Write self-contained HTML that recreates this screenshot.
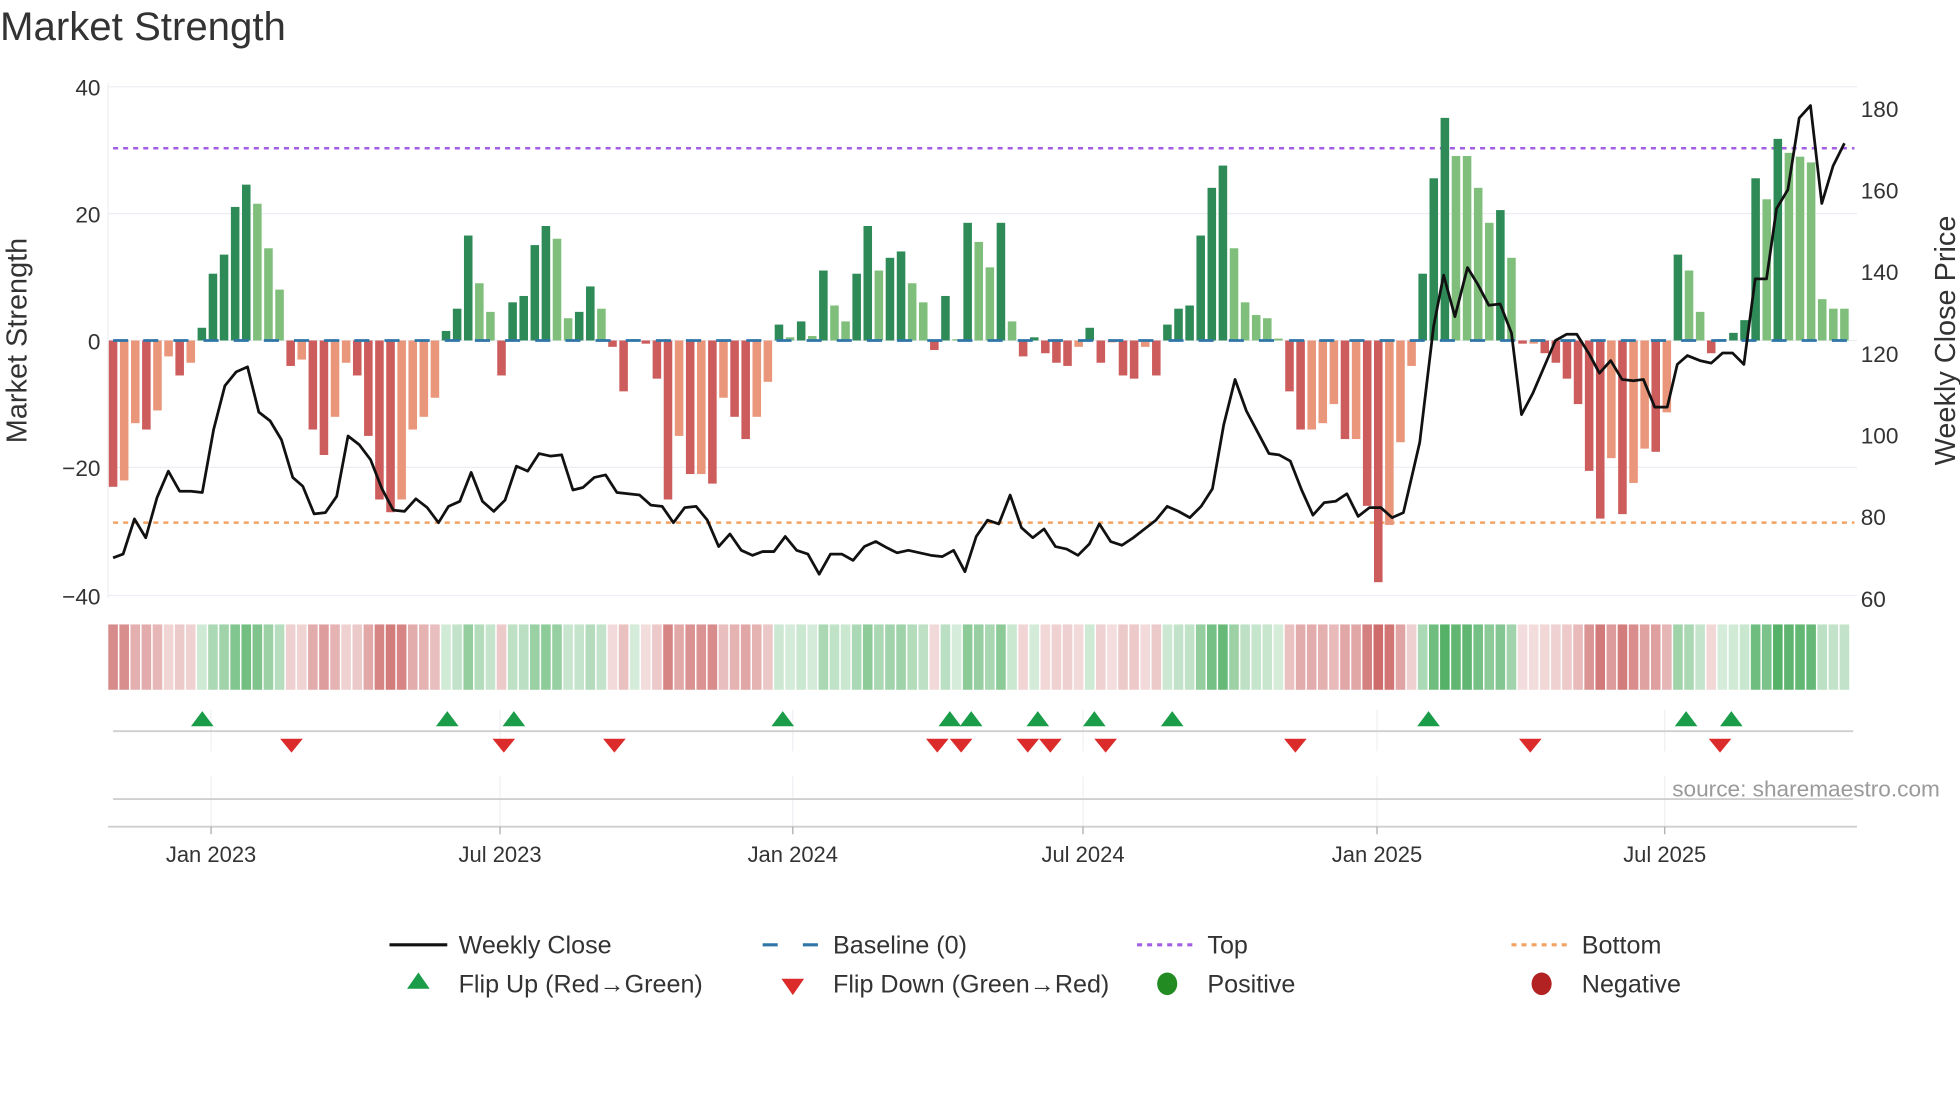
<!DOCTYPE html>
<html><head><meta charset="utf-8"><style>
html,body{margin:0;padding:0;background:#fff;width:1960px;height:1102px;overflow:hidden}
svg{display:block}
text{font-family:"Liberation Sans","DejaVu Sans",sans-serif;fill:#333}
</style></head><body>
<svg id="s" width="1960" height="1102" viewBox="0 0 1560 877.1" preserveAspectRatio="none" xmlns="http://www.w3.org/2000/svg">
<text x="0" y="32" font-size="32">Market Strength</text>
<g stroke="#eceef3" stroke-width="1">
<line x1="86" y1="69" x2="1478" y2="69"/><line x1="86" y1="170" x2="1478" y2="170"/><line x1="86" y1="271" x2="1478" y2="271"/><line x1="86" y1="372" x2="1478" y2="372"/><line x1="86" y1="474" x2="1478" y2="474"/>
<line x1="86" y1="66" x2="86" y2="476"/>
</g>
<g font-size="18" text-anchor="end">
<text x="80" y="76">40</text><text x="80" y="177">20</text><text x="80" y="278">0</text><text x="80" y="379">−20</text><text x="80" y="481">−40</text>
</g>
<g font-size="18">
<text x="1481" y="93">180</text><text x="1481" y="158">160</text><text x="1481" y="223">140</text><text x="1481" y="288">120</text><text x="1481" y="353">100</text><text x="1481" y="418">80</text><text x="1481" y="483">60</text>
</g>
<text transform="translate(21,271) rotate(-90)" font-size="23" text-anchor="middle">Market Strength</text>
<text transform="translate(1556,271) rotate(-90)" font-size="23" text-anchor="middle">Weekly Close Price</text>
<line x1="90" y1="118" x2="1476" y2="118" stroke="#a45ee5" stroke-width="2" stroke-dasharray="4,4"/>
<line x1="90" y1="416" x2="1476" y2="416" stroke="#f4a261" stroke-width="2" stroke-dasharray="4,4"/>
<g id="bars"></g>
<line x1="90" y1="271" x2="1476" y2="271" stroke="#2f75a8" stroke-width="2.2" stroke-dasharray="12,12"/>
<polyline id="price" fill="none" stroke="#111" stroke-width="2.2" stroke-linejoin="round"/>
<g id="heat"></g>
<g stroke="#eef0f3" stroke-width="1">
<line x1="168" y1="565" x2="168" y2="598"/><line x1="398" y1="565" x2="398" y2="598"/><line x1="631" y1="565" x2="631" y2="598"/><line x1="862" y1="565" x2="862" y2="598"/><line x1="1096" y1="565" x2="1096" y2="598"/><line x1="1325" y1="565" x2="1325" y2="598"/>
<line x1="168" y1="618" x2="168" y2="658"/><line x1="398" y1="618" x2="398" y2="658"/><line x1="631" y1="618" x2="631" y2="658"/><line x1="862" y1="618" x2="862" y2="658"/><line x1="1096" y1="618" x2="1096" y2="658"/><line x1="1325" y1="618" x2="1325" y2="658"/>
</g>
<line x1="90" y1="582" x2="1475" y2="582" stroke="#cfcfcf" stroke-width="1.5"/>
<line x1="90" y1="636" x2="1475" y2="636" stroke="#cfcfcf" stroke-width="1.5"/>
<line x1="86" y1="658" x2="1478" y2="658" stroke="#cfcfcf" stroke-width="1.5"/>
<g stroke="#aaa" stroke-width="1"><line x1="168" y1="658" x2="168" y2="664"/><line x1="398" y1="658" x2="398" y2="664"/><line x1="631" y1="658" x2="631" y2="664"/><line x1="862" y1="658" x2="862" y2="664"/><line x1="1096" y1="658" x2="1096" y2="664"/><line x1="1325" y1="658" x2="1325" y2="664"/></g>
<g id="marks"></g>
<text x="1544" y="634" font-size="18" text-anchor="end" style="fill:#9a9a9a">source: sharemaestro.com</text>
<g font-size="17.5" text-anchor="middle">
<text x="168" y="686">Jan 2023</text><text x="398" y="686">Jul 2023</text><text x="631" y="686">Jan 2024</text><text x="862" y="686">Jul 2024</text><text x="1096" y="686">Jan 2025</text><text x="1325" y="686">Jul 2025</text>
</g>
<line x1="310" y1="752" x2="356" y2="752" stroke="#111" stroke-width="2.5"/>
<line x1="607" y1="752" x2="651" y2="752" stroke="#2f75a8" stroke-width="2.5" stroke-dasharray="12,20"/>
<line x1="905" y1="752" x2="949" y2="752" stroke="#a45ee5" stroke-width="2.5" stroke-dasharray="4,4"/>
<line x1="1203" y1="752" x2="1247" y2="752" stroke="#f4a261" stroke-width="2.5" stroke-dasharray="4,4"/>
<polygon points="333,774 342,787 324,787" fill="#1a9c48"/>
<polygon points="622,779 640,779 631,792" fill="#dc2b2b"/>
<ellipse cx="929" cy="783" rx="8" ry="9" fill="#228b22"/>
<ellipse cx="1227" cy="783" rx="8" ry="9" fill="#b22222"/>
<g font-size="20">
<text x="365" y="759">Weekly Close</text><text x="663" y="759">Baseline (0)</text><text x="961" y="759">Top</text><text x="1259" y="759">Bottom</text>
<text x="365" y="790">Flip Up (Red→Green)</text><text x="663" y="790">Flip Down (Green→Red)</text><text x="961" y="790">Positive</text><text x="1259" y="790">Negative</text>
</g>
</svg>
<script>
var NS="http://www.w3.org/2000/svg";
var v=[-23,-22,-13,-14,-11,-2.5,-5.5,-3.5,
2,10.5,13.5,21,24.5,21.5,14.5,8,
-4,-3,-14,-18,-12,-3.5,-5.5,-15,-25,-27,-25,-14,-12,-9,
1.5,5,16.5,9,4.5,-5.5,6,7,15,18,16,3.5,4.5,8.5,5,
-1,-8,0,-0.5,-6,-25,-15,-21,-21,-22.5,-9,-12,-15.5,-12,-6.5,
2.5,0.5,3,0.7,11,5.5,3,10.5,18,11,13,14,9,6,
-1.5,7,0,18.5,15.5,11.5,18.5,3,-2.5,0.5,-2,-3.5,-4,-1,2,-3.5,-0.3,-5.5,-6,-1,-5.5,
2.5,5,5.5,16.5,24,27.5,14.5,6,4,3.5,0.3,
-8,-14,-14,-13,-10,-15.5,-15.5,-26,-38,-29,-16,-4,
10.5,25.5,35,29,29,24,18.5,20.5,13,
-0.5,-0.5,-2,-3.5,-6,-10,-20.5,-28,-18.5,-27.3,-22.4,-17,-17.5,-11.3,
13.5,11,4.5,-2,0,1.2,3.2,25.5,22.2,31.7,29.5,28.9,28,6.5,5,5];
var n=v.length,x0=90,x1=1468,sp=(x1-x0)/(n-1),Z=271,k=5.0625;
var bars=document.getElementById('bars'),heat=document.getElementById('heat');
function R(g,x,y,w,h,f){var r=document.createElementNS(NS,'rect');r.setAttribute('x',x);r.setAttribute('y',y);r.setAttribute('width',w);r.setAttribute('height',h);r.setAttribute('fill',f);g.appendChild(r);}
for(var i=0;i<n;i++){var c=x0+i*sp,val=v[i],p=i?v[i-1]:0,col;
 if(val>=0)col=(val>p)?'#2e8b57':'#7fbf7b';else col=(val<p||i==0)?'#cd5c5c':'#e9967a';
 var h=Math.abs(val)*k; if(h<1)h=1;
 R(bars,c-3.4,val>=0?Z-h:Z,6.8,h,col);
 var t=Math.min(Math.abs(val)/32,1),hc;
 if(val>=0)hc='rgba(70,170,90,'+(0.22+0.7*t)+')';else hc='rgba(200,90,90,'+(0.2+0.7*t)+')';
 R(heat,c-sp/2+0.6,497,sp-1.2,52,hc);}
var pts=[[90,444],[98,441],[107,413],[116,428],[125,396],[134,375],[143,391],[152,391],[161,392],[170,342],[179,307],[188,296],[197,292],[206,328],[215,335],[224,350],[233,380],[241,387],[250,409],[259,408],[268,395],[277,347],[286,354],[295,366],[304,389],[313,406],[322,407],[331,397],[340,404],[349,416],[357,403],[366,399],[375,376],[384,399],[393,407],[402,398],[411,371],[420,375],[429,361],[438,363],[447,362],[456,390],[464,388],[473,380],[482,378],[491,392],[500,393],[509,394],[518,402],[527,403],[536,416],[545,404],[554,403],[563,414],[572,435],[581,425],[590,438],[599,442],[607,439],[616,439],[625,427],[634,438],[643,441],[652,457],[661,441],[670,441],[679,446],[688,435],[697,431],[706,436],[714,440],[723,438],[732,440],[741,442],[750,443],[759,438],[768,455],[777,427],[786,414],[795,417],[804,394],[813,420],[822,428],[831,421],[840,435],[849,437],[858,442],[867,433],[875,417],[884,431],[893,434],[902,428],[911,421],[920,414],[929,403],[938,407],[947,412],[956,403],[965,389],[974,338],[983,302],[992,327],[1001,344],[1010,361],[1018,362],[1027,367],[1036,390],[1045,410],[1054,400],[1063,399],[1072,393],[1081,411],[1090,404],[1099,404],[1108,412],[1117,408],[1124,378],
[1130,352],[1141,260],[1149,219],[1158,252],[1168,213],[1176,226],[1185,243],[1194,242],[1203,265],[1211,330],[1220,313],[1229,292],[1238,271],[1247,266],[1255,266],[1265,282],[1273,297],[1282,287],[1291,302],[1300,303],[1308,302],[1317,324],[1327,324],[1335,290],[1343,283],[1353,287],[1362,289],[1371,281],[1379,281],[1388,290],[1397,222],[1406,222],[1414,166],[1423,151],[1432,94],[1441,84],[1450,162],[1459,132],[1468,114]];
document.getElementById('price').setAttribute('points',pts.map(function(p){return p.join(',')}).join(' '));
var m=document.getElementById('marks');
function T(x,up){var pl=document.createElementNS(NS,'polygon');
 if(up)pl.setAttribute('points',(x)+',566 '+(x+9)+',578 '+(x-9)+',578'),pl.setAttribute('fill','#1a9c48');
 else pl.setAttribute('points',(x-9)+',588 '+(x+9)+',588 '+x+',599'),pl.setAttribute('fill','#dc2b2b');
 m.appendChild(pl);}
[161,356,409,623,756,773,826,871,933,1137,1342,1378].forEach(function(x){T(x,1)});
[232,401,489,746,765,818,836,880,1031,1218,1369].forEach(function(x){T(x,0)});
</script>
</body></html>
